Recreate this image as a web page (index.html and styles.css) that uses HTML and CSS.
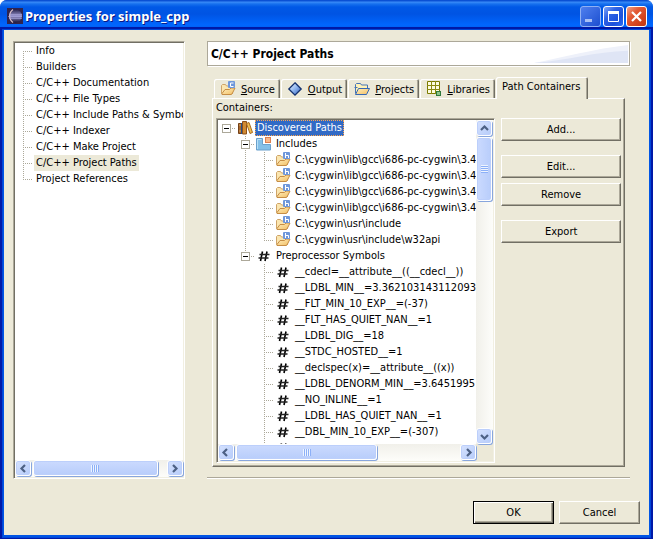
FILE: index.html
```html
<!DOCTYPE html>
<html lang="en">
<head>
<meta charset="utf-8">
<title>Properties for simple_cpp</title>
<link rel="stylesheet" href="styles.css">
</head>
<body>
<svg class="defs" aria-hidden="true">
  <defs>
    <linearGradient id="fold" x1="0" y1="0" x2="1" y2="1"><stop offset="0" stop-color="#fff0c0"/><stop offset="1" stop-color="#f2bd62"/></linearGradient>
    <linearGradient id="gem" x1="0" y1="0" x2="1" y2="1"><stop offset="0" stop-color="#f4fbff"/><stop offset=".5" stop-color="#8db4ee"/><stop offset="1" stop-color="#2856b8"/></linearGradient>
    <linearGradient id="orb" x1="0" y1="0" x2="0" y2="1"><stop offset="0" stop-color="#27234b"/><stop offset=".5" stop-color="#9a96d0"/><stop offset="1" stop-color="#1b1638"/></linearGradient>
    <symbol id="folder" viewBox="0 0 16 16">
      <path d="M1.500 12.500V4.500l1-1h3l1 1.500h6v7.500z" fill="#fbe6b0" stroke="#cfa468"/>
      <path d="M1.800 12.800 5 8.500h4.500l1.500-1.500h4l-3 6-1 .5H2z" fill="url(#fold)" stroke="#c68d45"/>
      <rect x="8" y="0" width="7" height="7" rx="1" fill="#6f97da"/>
    </symbol>
    <symbol id="folder-h" viewBox="0 0 16 16">
      <use href="#folder"/><path d="M10.500 1v5M11 3.500h2.500V6" fill="none" stroke="#fff"/>
    </symbol>
    <symbol id="folder-c" viewBox="0 0 16 16">
      <use href="#folder"/><path d="M13.500 2h-3v3.500h3" fill="none" stroke="#fff"/>
    </symbol>
    <symbol id="diamond" viewBox="-1 -1 16 16">
      <path d="M7 .8 13.200 7 7 13.200.8 7z" fill="url(#gem)" stroke="#12306e" stroke-width="1.300"/>
    </symbol>
    <symbol id="open-folder" viewBox="0 0 16 16">
      <path d="M1.500 12.500V3.500l1-1h4l1 1.500h6v3" fill="#fff2b8" stroke="#4674b8"/>
      <path d="M.5 6.500h3M13.500 4v3" stroke="#4674b8"/>
      <path d="M1.500 13.500 4.500 7.500h11l-3 6z" fill="url(#fold)" stroke="#3568b4"/>
    </symbol>
    <symbol id="grid" viewBox="0 0 16 16">
      <path d="M1.500 .5h12v12h-12z" fill="#fffde0" stroke="#7c7a00"/>
      <path d="M5.500 0v13M9.500 0v13M1 4.500h13M1 8.500h13" stroke="#8c8a10"/>
      <rect x="10.500" y="10.500" width="4" height="4" fill="#8cc48c" stroke="#2f7a3d"/>
    </symbol>
    <symbol id="books" viewBox="0 0 16 16">
      <path d="M1.500 3.500h3v10h-3z" fill="#a8682c" stroke="#744018"/>
      <path d="M5.500 1.500h4v12.500h-4z" fill="#d08a32" stroke="#8a4f1a"/>
      <path d="M2 5h2M2 11h2" stroke="#d8a45c"/><path d="M4.500 3v11" stroke="#24508c"/>
      <path d="M9.500 3.500 12 2.500l3.500 10-2.500 1z" fill="#f1c054" stroke="#a8691e"/>
    </symbol>
    <symbol id="blocks" viewBox="0 0 16 16">
      <path d="M.5 2.500h6v6h8v5.500H.5z" fill="#84c0e8" stroke="#6aa0cc"/>
      <path d="M1.500 13V3.500h4" fill="none" stroke="#b8e0f6"/>
      <rect x="9.500" y="1.500" width="5" height="5" fill="#f9b98a" stroke="#dc8050"/>
    </symbol>
    <symbol id="hash" viewBox="0 0 16 16">
      <path d="M6.500 3.500 4.500 13M11 3.500 9 13" stroke="#000" stroke-width="1.600"/>
      <path d="M3.500 6.500h10M2.500 10h10" stroke="#222" stroke-width="1.300"/>
    </symbol>
    <symbol id="eclipse" viewBox="0 0 16 16">
      <path d="M0 0h16v16H0z" fill="#30244e"/>
      <circle cx="8.500" cy="8" r="6.500" fill="url(#orb)"/>
      <path d="M6 1.500a8 8 0 0 0 0 13" fill="none" stroke="#d8bfc8" stroke-width="1.200"/>
      <path d="M2 6.500h13M1 8.500h14M2 10.500h13" stroke="#aaa7dc" stroke-width=".6"/>
    </symbol>
    <symbol id="arrow" viewBox="0 0 9 9"><path d="M1 6 4.500 2.500 8 6" fill="none" stroke="#4d6185" stroke-width="2.200"/></symbol>
  </defs>
</svg>
<main class="window">
  <header class="titlebar">
    <svg class="app-icon"><use href="#eclipse"/></svg>
    <h1>Properties for simple_cpp</h1>
    <button class="caption minimize" aria-label="Minimize" disabled><svg viewBox="0 0 19 19"><path d="M4 13.500h7" stroke="#a9c0f5" stroke-width="3"/></svg></button>
    <button class="caption" aria-label="Maximize"><svg viewBox="0 0 19 19"><path d="M4.500 5v9.500h10V5" fill="none" stroke="#fff"/><path d="M4 5.500h11" stroke="#fff" stroke-width="3"/></svg></button>
    <button class="caption close" aria-label="Close"><svg viewBox="0 0 19 19"><path d="m5 5 9 9m0-9-9 9" stroke="#fff" stroke-width="2.200"/></svg></button>
  </header>
  <div class="content">
    <div class="columns">
      <nav class="well pages" aria-label="Property pages">
        <ul class="rows">
          <li><i class="g first"></i><a href="#info">Info</a></li>
          <li><i class="g tee"></i><a href="#builders">Builders</a></li>
          <li><i class="g tee"></i><a href="#doc">C/C++ Documentation</a></li>
          <li><i class="g tee"></i><a href="#types">C/C++ File Types</a></li>
          <li><i class="g tee"></i><a href="#symbols">C/C++ Include Paths &amp; Symbols</a></li>
          <li><i class="g tee"></i><a href="#indexer">C/C++ Indexer</a></li>
          <li><i class="g tee"></i><a href="#make">C/C++ Make Project</a></li>
          <li><i class="g tee"></i><a href="#paths" class="current" aria-current="page">C/C++ Project Paths</a></li>
          <li><i class="g end"></i><a href="#refs">Project References</a></li>
        </ul>
        <div class="scroll horizontal">
          <button class="step" aria-label="Scroll left"><svg class="left"><use href="#arrow"/></svg></button>
          <div class="track"><div class="thumb pages-thumb"><i></i></div></div>
          <button class="step" aria-label="Scroll right"><svg class="right"><use href="#arrow"/></svg></button>
        </div>
      </nav>
      <section class="page">
        <h2>C/C++ Project Paths<svg class="swoosh" viewBox="0 0 94 20" preserveAspectRatio="none" aria-hidden="true"><path d="M0 20C30 14 60 5 94 1v19z" fill="#eef1fa"/><path d="M0 20C35 17 60 8 94 7v13z" fill="#dfe5f5"/></svg></h2>
        <div class="tabs" role="tablist">
          <button role="tab"><svg><use href="#folder-c"/></svg><span><u>S</u>ource</span></button>
          <button role="tab"><svg><use href="#diamond"/></svg><span><u>O</u>utput</span></button>
          <button role="tab"><svg><use href="#open-folder"/></svg><span><u>P</u>rojects</span></button>
          <button role="tab"><svg><use href="#grid"/></svg><span><u>L</u>ibraries</span></button>
          <button role="tab" class="active" aria-selected="true">Path Containers</button>
        </div>
        <div class="panel" role="tabpanel">
          <div class="list">
            <div class="caption-text" id="containers">Containers:</div>
            <div class="well containers">
              <ul class="rows" aria-labelledby="containers">
                <li><i class="g root"><b></b></i><svg><use href="#books"/></svg><span class="selected">Discovered Paths</span></li>
                <li><i class="g"></i><i class="g tee"><b></b></i><svg><use href="#blocks"/></svg><span>Includes</span></li>
                <li><i class="g"></i><i class="g bar"></i><i class="g tee"></i><svg><use href="#folder-h"/></svg><span>C:\cygwin\lib\gcc\i686-pc-cygwin\3.4.</span></li>
                <li><i class="g"></i><i class="g bar"></i><i class="g tee"></i><svg><use href="#folder-h"/></svg><span>C:\cygwin\lib\gcc\i686-pc-cygwin\3.4.</span></li>
                <li><i class="g"></i><i class="g bar"></i><i class="g tee"></i><svg><use href="#folder-h"/></svg><span>C:\cygwin\lib\gcc\i686-pc-cygwin\3.4.</span></li>
                <li><i class="g"></i><i class="g bar"></i><i class="g tee"></i><svg><use href="#folder-h"/></svg><span>C:\cygwin\lib\gcc\i686-pc-cygwin\3.4.</span></li>
                <li><i class="g"></i><i class="g bar"></i><i class="g tee"></i><svg><use href="#folder-h"/></svg><span>C:\cygwin\usr\include</span></li>
                <li><i class="g"></i><i class="g bar"></i><i class="g end"></i><svg><use href="#folder-h"/></svg><span>C:\cygwin\usr\include\w32api</span></li>
                <li><i class="g"></i><i class="g end"><b></b></i><svg><use href="#hash"/></svg><span>Preprocessor Symbols</span></li>
                <li><i class="g"></i><i class="g"></i><i class="g tee"></i><svg><use href="#hash"/></svg><span>__cdecl=__attribute__((__cdecl__))</span></li>
                <li><i class="g"></i><i class="g"></i><i class="g tee"></i><svg><use href="#hash"/></svg><span>__LDBL_MIN__=3.3621031431120935</span></li>
                <li><i class="g"></i><i class="g"></i><i class="g tee"></i><svg><use href="#hash"/></svg><span>__FLT_MIN_10_EXP__=(-37)</span></li>
                <li><i class="g"></i><i class="g"></i><i class="g tee"></i><svg><use href="#hash"/></svg><span>__FLT_HAS_QUIET_NAN__=1</span></li>
                <li><i class="g"></i><i class="g"></i><i class="g tee"></i><svg><use href="#hash"/></svg><span>__LDBL_DIG__=18</span></li>
                <li><i class="g"></i><i class="g"></i><i class="g tee"></i><svg><use href="#hash"/></svg><span>__STDC_HOSTED__=1</span></li>
                <li><i class="g"></i><i class="g"></i><i class="g tee"></i><svg><use href="#hash"/></svg><span>__declspec(x)=__attribute__((x))</span></li>
                <li><i class="g"></i><i class="g"></i><i class="g tee"></i><svg><use href="#hash"/></svg><span>__LDBL_DENORM_MIN__=3.6451995</span></li>
                <li><i class="g"></i><i class="g"></i><i class="g tee"></i><svg><use href="#hash"/></svg><span>__NO_INLINE__=1</span></li>
                <li><i class="g"></i><i class="g"></i><i class="g tee"></i><svg><use href="#hash"/></svg><span>__LDBL_HAS_QUIET_NAN__=1</span></li>
                <li><i class="g"></i><i class="g"></i><i class="g tee"></i><svg><use href="#hash"/></svg><span>__DBL_MIN_10_EXP__=(-307)</span></li>
                <li><i class="g"></i><i class="g"></i><i class="g tee"></i><svg><use href="#hash"/></svg></li>
              </ul>
              <div class="scroll vertical">
                <button class="step" aria-label="Scroll up"><svg><use href="#arrow"/></svg></button>
                <div class="track"><div class="thumb"><i></i></div></div>
                <button class="step" aria-label="Scroll down"><svg class="down"><use href="#arrow"/></svg></button>
              </div>
              <div class="scroll horizontal">
                <button class="step" aria-label="Scroll left"><svg class="left"><use href="#arrow"/></svg></button>
                <div class="track"><div class="thumb"><i></i></div></div>
                <button class="step" aria-label="Scroll right"><svg class="right"><use href="#arrow"/></svg></button>
              </div>
            </div>
          </div>
          <div class="actions">
            <button class="push">Add...</button>
            <button class="push group">Edit...</button>
            <button class="push">Remove</button>
            <button class="push group">Export</button>
          </div>
        </div>
        <hr>
      </section>
    </div>
    <footer>
      <button class="push default">OK</button>
      <button class="push">Cancel</button>
    </footer>
  </div>
</main>
</body>
</html>
```
FILE: styles.css
```css
* { box-sizing: border-box; }
body {
  margin: 0;
  background: #fff;
  color: #000;
  font: 11px/16px Tahoma, "DejaVu Sans Condensed", "Noto Sans", sans-serif;
}
button { font: inherit; color: inherit; padding: 0; margin: 0; }
ul { list-style: none; margin: 0; padding: 0; }
.defs { position: absolute; width: 0; height: 0; }

/* Window frame */
.window {
  display: flex;
  flex-direction: column;
  height: 100vh;
  overflow: hidden;
  border-radius: 7px 7px 0 0;
  background: #0046d8;
}
.titlebar {
  display: flex;
  flex: none;
  align-items: center;
  gap: 2px;
  height: 30px;
  padding: 2px 6px 0 7px;
  background: linear-gradient(#0a50d4 0, #0a50d4 1px, #3b8cf8 2px, #1670ee 4px, #0058e6 7px, #0054e3 14px, #005ef2 20px, #0066ff 25px, #0060f0 28px, #0048c4 30px);
}
.app-icon { width: 16px; height: 16px; }
.titlebar h1 {
  flex: 1;
  margin: 0;
  color: #fff;
  font: bold 13px/20px "Trebuchet MS", "Noto Sans", sans-serif;
  text-shadow: 1px 1px #0a1883;
}
.caption {
  width: 21px;
  height: 21px;
  border: 1px solid #fff;
  border-radius: 3px;
  background: linear-gradient(135deg, #7fa6f8, #2f62e4 35%, #1c50dc 70%, #2b6cf4);
}
.caption svg { display: block; width: 19px; height: 19px; }
.minimize { border-color: #8fb0f4; background: linear-gradient(135deg, #4f7fee, #1c4fd0); }
.close { background: linear-gradient(135deg, #f0a088, #e35a35 35%, #d2401a 75%, #c03a18); }

.content {
  display: flex;
  flex: 1;
  flex-direction: column;
  min-height: 0;
  margin: 0 4px 4px;
  padding: 11px 9px;
  background: #ece9d8;
  box-shadow: 0 1px 0 1px #0055e5, 0 1px 0 2px #0046d8, 0 1px 0 4px #0019a8;
}
.columns {
  display: grid;
  grid-template-columns: minmax(0, 13fr) minmax(0, 32fr);
  gap: 22px;
  flex: 1;
  min-height: 0;
  padding-right: 10px;
}
.well {
  min-height: 0;
  overflow: hidden;
  border: 1px solid;
  border-color: #aca899 #fff #fff #aca899;
  background: #fff;
  box-shadow: inset 1px 1px #716f64, inset -1px -1px #f1efe2;
  padding: 1px;
}

/* Trees */
.rows { min-width: 0; min-height: 0; overflow: hidden; }
.rows li { display: flex; height: 16px; white-space: nowrap; }
.rows svg { flex: none; width: 16px; height: 16px; margin-right: 2px; }
.rows a, .rows span { padding: 0 2px; color: #000; text-decoration: none; }
.rows .current { background: #ece9d8; }
.rows .selected { background: #316ac5; color: #fff; outline: 1px dotted #ffa64d; outline-offset: -1px; }
.g {
  --across: repeating-linear-gradient(90deg, #aca899 0 1px, transparent 1px 2px);
  --along: repeating-linear-gradient(#aca899 0 1px, transparent 1px 2px);
  display: flex;
  flex: none;
  width: 19px;
  height: 16px;
  background-repeat: no-repeat;
}
.tee { background-image: var(--across), var(--along); background-position: 8px 8px, 8px 0; background-size: 10px 1px, 1px 16px; }
.end { background-image: var(--across), var(--along); background-position: 8px 8px, 8px 0; background-size: 10px 1px, 1px 8px; }
.first { background-image: var(--across), var(--along); background-position: 8px 8px; background-size: 10px 1px, 1px 8px; }
.root { background-image: var(--across); background-position: 8px 8px; background-size: 10px 1px; }
.bar { background-image: var(--along); background-position: 8px 0; background-size: 1px 16px; }
.g b {
  width: 9px;
  height: 9px;
  margin: 4px;
  border: 1px solid #aca899;
  background: linear-gradient(#000, #000) center / 5px 1px no-repeat #fff;
}

.pages { display: grid; grid-template-rows: minmax(0, 1fr) 17px; }
.containers {
  display: grid;
  flex: 1;
  grid-template: minmax(0, 1fr) 17px / minmax(0, 1fr) 17px;
  background: #ece9d8;
}
.containers .rows { background: #fff; }

/* Scroll bars */
.scroll { display: flex; background: linear-gradient(#f1f0ea, #fdfdfa); }
.vertical { flex-direction: column; background: linear-gradient(90deg, #f1f0ea, #fdfdfa); }
.step, .thumb {
  flex: none;
  display: flex;
  align-items: center;
  justify-content: center;
  border: 1px solid #fff;
  border-radius: 3px;
  background: linear-gradient(135deg, #d6e2fe, #b6ccfa);
  box-shadow: inset 0 0 0 1px #bccffb, 1px 1px #88a6dd;
}
.step { width: 16px; height: 16px; }
.step svg { width: 9px; height: 9px; }
.left { transform: rotate(-90deg); }
.right { transform: rotate(90deg); }
.down { transform: rotate(180deg); }
.track { display: flex; flex: 1; min-width: 0; min-height: 0; padding-left: 2px; }
.thumb { width: 63%; height: 16px; background: linear-gradient(#cbdafe, #b8cdfb); }
.pages-thumb { width: 93%; }
.vertical .track { padding: 1px 0 0; }
.vertical .thumb { width: 16px; height: 22%; background: linear-gradient(90deg, #cbdafe, #b8cdfb); }
.thumb i { width: 8px; height: 7px; background: repeating-linear-gradient(90deg, #eef4fe 0 1px, #8cb0f8 1px 2px); }
.vertical .thumb i { width: 7px; height: 8px; background: repeating-linear-gradient(#eef4fe 0 1px, #8cb0f8 1px 2px); }

/* Property page */
.page { display: flex; flex-direction: column; min-height: 0; }
.page h2 {
  display: flex;
  flex: none;
  align-items: center;
  justify-content: space-between;
  height: 25px;
  margin: 0;
  padding: 0 1px 0 3px;
  border: 1px solid #aca899;
  background: #fff;
  font-size: 12px;
  box-shadow: 1px 1px #fff;
}
.swoosh { width: 94px; height: 19px; }
.tabs { display: flex; align-items: flex-end; flex: none; height: 32px; padding-left: 7px; }
.tabs button {
  display: flex;
  align-items: center;
  gap: 5px;
  height: 19px;
  margin-right: 1px;
  padding: 2px 5px 0 6px;
  border: 0;
  border-radius: 2px 2px 0 0;
  background: #ece9d8;
  box-shadow: inset 1px 1px #fff, inset -1px 0 #716f64, inset -2px 0 #aca899;
  white-space: nowrap;
}
.tabs svg { width: 16px; height: 16px; flex: none; margin-top: -2px; }
.tabs .active {
  position: relative;
  z-index: 1;
  height: 22px;
  margin-bottom: -1px;
  padding: 0 8px 2px 6px;
}
.panel {
  display: flex;
  flex: 1;
  gap: 6px;
  min-height: 0;
  margin: 0 5px;
  padding: 1px 3px 3px;
  border: 1px solid;
  border-color: #fff #716f64 #716f64 #fff;
  box-shadow: inset -1px -1px #aca899;
}
.list { display: flex; flex: 7; flex-direction: column; min-width: 0; }
.caption-text { height: 18px; }
.actions { display: flex; flex: 3; flex-direction: column; gap: 5px; padding-top: 18px; }
.group { margin-top: 9px; }
.push {
  min-width: 81px;
  height: 23px;
  border: 1px solid;
  border-color: #fff #716f64 #716f64 #fff;
  background: #ece9d8;
  box-shadow: inset -1px -1px #aca899;
}
.default { border-color: #000; box-shadow: inset 1px 1px #fff, inset -1px -1px #716f64, inset -2px -2px #aca899; }
hr { flex: none; height: 2px; margin: 10px 0 0; border: 0; width: 100%; background: linear-gradient(#aca899 50%, #fff 50%); }
footer { display: flex; flex: none; justify-content: flex-end; gap: 5px; padding-top: 22px; }
```
